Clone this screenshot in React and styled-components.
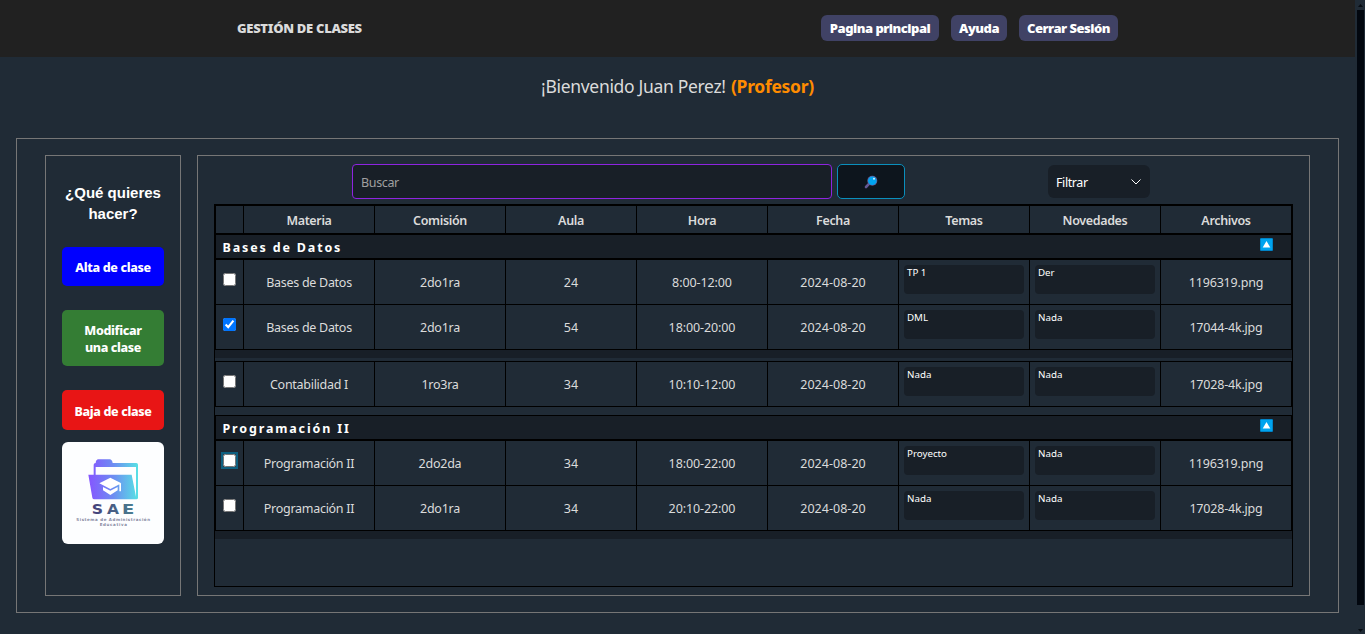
import React from "react";
import styled, { createGlobalStyle, css } from "styled-components";

const GlobalStyle = createGlobalStyle`
  * { box-sizing: border-box; }
  body {
    margin: 0;
    background: #202b36;
    color: #dbdbdb;
    font-family: "Noto Sans", "Open Sans", sans-serif;
    font-size: 12.5px;
    overflow: hidden;
  }
`;

const Screen = styled.div`
  display: flex;
  height: 634px;
`;

const Page = styled.div`
  width: 1355px;
  display: flex;
  flex-direction: column;
`;

const ScrollTrack = styled.div`
  width: 10px;
  padding: 4px 1px 2px 2px;
  display: flex;
  flex-direction: column;
  align-items: center;
`;

const ScrollThumb = styled.div`
  width: 7px;
  height: 595px;
  margin: 3px 0 auto;
  background: #02070f;
`;

const ScrollArrow = styled.svg`
  display: block;
  width: 5px;
  height: 3px;
  fill: #060b11;
`;

const Header = styled.header`
  height: 57px;
  background: #212121;
  display: flex;
  align-items: center;
  justify-content: space-between;
  padding: 0 237px 1px 237px;
`;

const Brand = styled.h1`
  margin: 0;
  font-size: 13px;
  font-weight: 900;
  letter-spacing: -0.3px;
  line-height: 20px;
`;

const Nav = styled.nav`
  display: flex;
  gap: 12px;
`;

const NavButton = styled.a`
  width: ${(p) => p.$width}px;
  height: 26px;
  border-radius: 6px;
  background: #404265;
  color: #fff;
  font-size: 13px;
  font-weight: 900;
  letter-spacing: -0.5px;
  line-height: 26px;
  text-align: center;
  white-space: nowrap;
`;

const Welcome = styled.p`
  margin: 16px 0 0;
  height: 26px;
  line-height: 26px;
  font-size: 17.5px;
  letter-spacing: -0.32px;
  text-align: center;
  white-space: nowrap;
`;

const Role = styled.span`
  color: #ff8c00;
  font-weight: 700;
  letter-spacing: -0.3px;
  margin-left: 1px;
`;

const Frame = styled.main`
  margin: 39px 16px 0;
  height: 475px;
  border: 1px solid #767676;
  padding: 16px 28px;
  display: flex;
  gap: 16px;
`;

const Sidebar = styled.aside`
  width: 136px;
  height: 441px;
  border: 1px solid #767676;
  padding: 26px 16px 0;
`;

const SideTitle = styled.h2`
  margin: 0 -10px 23px;
  color: #fff;
  font: 700 15px/21px "Liberation Sans", Arial, sans-serif;
  text-align: center;
`;

const ActionButton = styled.button`
  display: block;
  width: 102px;
  height: ${(p) => p.$height}px;
  margin: 0 0 ${(p) => p.$gap}px;
  padding: ${(p) => p.$drop || 2}px 0 0;
  border: 0;
  border-radius: 5px;
  background: ${(p) => p.$color};
  color: #fff;
  font: 800 12.5px/17.5px "Noto Sans", sans-serif;
  letter-spacing: -0.35px;
`;

const Logo = styled.svg`
  display: block;
  width: 102px;
  height: 102px;
  border-radius: 6px;
  background: #fdfeff;
`;

const Content = styled.section`
  width: 1113px;
  height: 441px;
  border: 1px solid #767676;
  padding: 8px 16px;
`;

const Toolbar = styled.div`
  height: 35px;
  margin: 0 0 5px 138px;
  display: flex;
  align-items: center;
`;

const SearchInput = styled.input`
  width: 480px;
  height: 35px;
  border: 1px solid #8e24e0;
  border-radius: 4px;
  background: #181f27;
  padding: 2px 8px 0;
  color: #fff;
  font: 12.5px "Noto Sans", sans-serif;
  letter-spacing: -0.35px;
  outline: 0;
  &::placeholder { color: #a0a0a0; }
`;

const SearchButton = styled.button`
  width: 68px;
  height: 35px;
  margin-left: 5px;
  border: 1px solid #0a8fbd;
  border-radius: 5px;
  background: #0d151d;
  padding: 0;
  display: flex;
  align-items: center;
  justify-content: center;
`;

const FilterSelect = styled.div`
  width: 102px;
  height: 33px;
  margin-left: 143px;
  padding: 1px 9px 0 8px;
  border-radius: 6px;
  background: #181f27;
  color: #fff;
  letter-spacing: -0.4px;
  display: flex;
  align-items: center;
  justify-content: space-between;
`;

const TableBox = styled.div`
  width: 1079px;
  height: 383px;
  border: 1px solid #000;
`;

const Block = styled.div`
  border: solid #000;
  border-width: 1px 0 0 1px;
`;

const Row = styled.div`
  display: grid;
  grid-template-columns: 28px repeat(8, 131px);
  height: ${(p) => (p.$head ? 28 : 45)}px;
  border-bottom: 1px solid #000;
`;

const Cell = styled.div`
  border-right: 1px solid #000;
  display: flex;
  align-items: center;
  justify-content: center;
  white-space: nowrap;
  letter-spacing: ${(p) => p.$spacing || 0}px;
  ${(p) => p.$head && css`font-weight: 600; padding-top: 1px;`}
`;

const CheckCell = styled.div`
  border-right: 1px solid #000;
  padding: 13px 0 0 7px;
`;

const Check = styled.input`
  display: block;
  width: 13px;
  height: 13px;
  margin: 0;
  box-shadow: ${(p) => (p.$focused ? "0 0 0 2px #0f6080" : "none")};
`;

const NoteCell = styled.div`
  border-right: 1px solid #000;
  padding: 5px;
`;

const Note = styled.div`
  width: 120px;
  height: 29px;
  border-radius: 4px;
  background: #181f27;
  color: #fff;
  padding: 0 3px;
  font-size: 9.75px;
  line-height: 15px;
`;

const GroupRow = styled.div`
  height: ${(p) => (p.$doubleTop ? 26 : 25)}px;
  border: solid #000;
  border-width: ${(p) => (p.$doubleTop ? 1 : 0)}px 1px 2px 0;
  background: #181f27;
  color: #fff;
  display: flex;
  justify-content: space-between;
  padding: 0 18px 0 6.5px;
  font-size: 12.5px;
  font-weight: 700;
  line-height: 26px;
  letter-spacing: 1.85px;
`;

const Toggle = styled.svg`
  display: block;
  width: 13px;
  height: 13px;
  margin-top: 3px;
`;

const Strip = styled.div`
  height: 8px;
  margin-bottom: ${(p) => p.$after || 0}px;
  background: ${(p) => (p.$dark ? "#181f27" : "transparent")};
`;

const COLUMNS = ["Materia", "Comisión", "Aula", "Hora", "Fecha", "Temas", "Novedades", "Archivos"];

function Group({ name, doubleTop }) {
  return (
    <GroupRow $doubleTop={doubleTop}>
      <span>{name}</span>
      <Toggle viewBox="0 0 13 13">
        <rect width="13" height="13" rx="1" fill="#0078b8" />
        <rect x=".7" y=".7" width="11.6" height="11.6" rx=".6" fill="#00a4ef" />
        <path d="M6.5 3 10.3 9.6H2.7Z" fill="#fff" />
      </Toggle>
    </GroupRow>
  );
}

function ClassRow({ data, checked, focused }) {
  const [subject, commission, room, time, date, topic, news, file] = data;
  return (
    <Row>
      <CheckCell>
        <Check type="checkbox" defaultChecked={checked} $focused={focused} />
      </CheckCell>
      <Cell $spacing={-0.28}>{subject}</Cell>
      <Cell $spacing={-0.25}>{commission}</Cell>
      <Cell>{room}</Cell>
      <Cell $spacing={-0.1}>{time}</Cell>
      <Cell $spacing={0.03}>{date}</Cell>
      <NoteCell><Note>{topic}</Note></NoteCell>
      <NoteCell><Note>{news}</Note></NoteCell>
      <Cell $spacing={-0.2}>{file}</Cell>
    </Row>
  );
}

function SaeLogo() {
  return (
    <Logo viewBox="6 6 306 306">
      <defs>
        <linearGradient id="folder" x1="85" x2="235" y1="0" y2="0" gradientUnits="userSpaceOnUse">
          <stop offset="0" stopColor="#8655ff" />
          <stop offset=".5" stopColor="#6d8df2" />
          <stop offset="1" stopColor="#57e2e4" />
        </linearGradient>
        <linearGradient id="word" x1="97" x2="220" y1="0" y2="0" gradientUnits="userSpaceOnUse">
          <stop offset="0" stopColor="#45407a" />
          <stop offset="1" stopColor="#4a7d90" />
        </linearGradient>
      </defs>
      <path
        fill="url(#folder)"
        fillRule="evenodd"
        d="M101 104V74Q101 69 107 69Q108 58 115 58H149Q156 58 158 69H229Q234 69 234 74V173Q234 178 229 178H103Q98 178 97 173L85 104ZM107 104H215L228 170V81H107Z"
      />
      <path fill="#fff" d="M118 130 151 113 184 130 151 147Z M129 141 151 152 173 141V151L151 165 129 151Z M178 131H183V154H178Z" />
      <g fill="url(#word)" fontFamily="DejaVu Sans, sans-serif" fontSize="41" fontWeight="700">
        <text x="95" y="223" textLength="34" lengthAdjust="spacingAndGlyphs">S</text>
        <text x="141" y="223" textLength="36" lengthAdjust="spacingAndGlyphs">A</text>
        <text x="186" y="223" textLength="37" lengthAdjust="spacingAndGlyphs">E</text>
      </g>
      <g fill="#85879f" fontFamily="DejaVu Sans, sans-serif" fontSize="12" fontWeight="700">
        <text x="49" y="242" textLength="221" lengthAdjust="spacing">Sistema de Administración</text>
        <text x="119" y="258" textLength="82" lengthAdjust="spacing">Educativa</text>
      </g>
    </Logo>
  );
}

export default function App() {
  return (
    <Screen>
      <GlobalStyle />
      <Page>
        <Header>
          <Brand>GESTIÓN DE CLASES</Brand>
          <Nav>
            <NavButton $width={118}>Pagina principal</NavButton>
            <NavButton $width={56}>Ayuda</NavButton>
            <NavButton $width={99}>Cerrar Sesión</NavButton>
          </Nav>
        </Header>
        <Welcome>¡Bienvenido Juan Perez! <Role>(Profesor)</Role></Welcome>
        <Frame>
          <Sidebar>
            <SideTitle>¿Qué quieres<br />hacer?</SideTitle>
            <ActionButton $color="#0000ff" $height={39} $gap={24}>Alta de clase</ActionButton>
            <ActionButton $color="#347d34" $height={56} $gap={24}>Modificar<br />una clase</ActionButton>
            <ActionButton $color="#e81515" $height={40} $gap={12} $drop={3}>Baja de clase</ActionButton>
            <SaeLogo />
          </Sidebar>
          <Content>
            <Toolbar>
              <SearchInput placeholder="Buscar" />
              <SearchButton>
                <svg width="14" height="14" viewBox="0 0 14 14">
                  <path d="M5.7 8.2 2 12" stroke="#635994" strokeWidth="2.6" strokeLinecap="round" />
                  <circle cx="8.3" cy="5.7" r="5" fill="#635994" />
                  <circle cx="8.3" cy="5.7" r="4.3" fill="#00a4ef" />
                  <circle cx="10" cy="3.8" r="1" fill="#d5f2ff" />
                </svg>
              </SearchButton>
              <FilterSelect>
                Filtrar
                <svg width="10" height="6" viewBox="0 0 10 6">
                  <path d="M.5.5 5 5 9.5.5" fill="none" stroke="#fff" strokeWidth="1" />
                </svg>
              </FilterSelect>
            </Toolbar>
            <TableBox>
              <Block>
                <Row $head>
                  <Cell $head />
                  {COLUMNS.map((c) => <Cell key={c} $head $spacing={-0.35}>{c}</Cell>)}
                </Row>
                <Group name="Bases de Datos" doubleTop />
                <ClassRow data={["Bases de Datos", "2do1ra", "24", "8:00-12:00", "2024-08-20", "TP 1", "Der", "1196319.png"]} />
                <ClassRow checked data={["Bases de Datos", "2do1ra", "54", "18:00-20:00", "2024-08-20", "DML", "Nada", "17044-4k.jpg"]} />
              </Block>
              <Strip $dark $after={3} />
              <Block>
                <ClassRow data={["Contabilidad I", "1ro3ra", "34", "10:10-12:00", "2024-08-20", "Nada", "Nada", "17028-4k.jpg"]} />
              </Block>
              <Strip />
              <Block>
                <Group name="Programación II" />
                <ClassRow focused data={["Programación II", "2do2da", "34", "18:00-22:00", "2024-08-20", "Proyecto", "Nada", "1196319.png"]} />
                <ClassRow data={["Programación II", "2do1ra", "34", "20:10-22:00", "2024-08-20", "Nada", "Nada", "17028-4k.jpg"]} />
              </Block>
              <Strip $dark />
            </TableBox>
          </Content>
        </Frame>
      </Page>
      <ScrollTrack>
        <ScrollArrow viewBox="0 0 5 3"><path d="M2.5 0 5 3H0Z" /></ScrollArrow>
        <ScrollThumb />
        <ScrollArrow viewBox="0 0 5 3"><path d="M0 0H5L2.5 3Z" /></ScrollArrow>
      </ScrollTrack>
    </Screen>
  );
}
